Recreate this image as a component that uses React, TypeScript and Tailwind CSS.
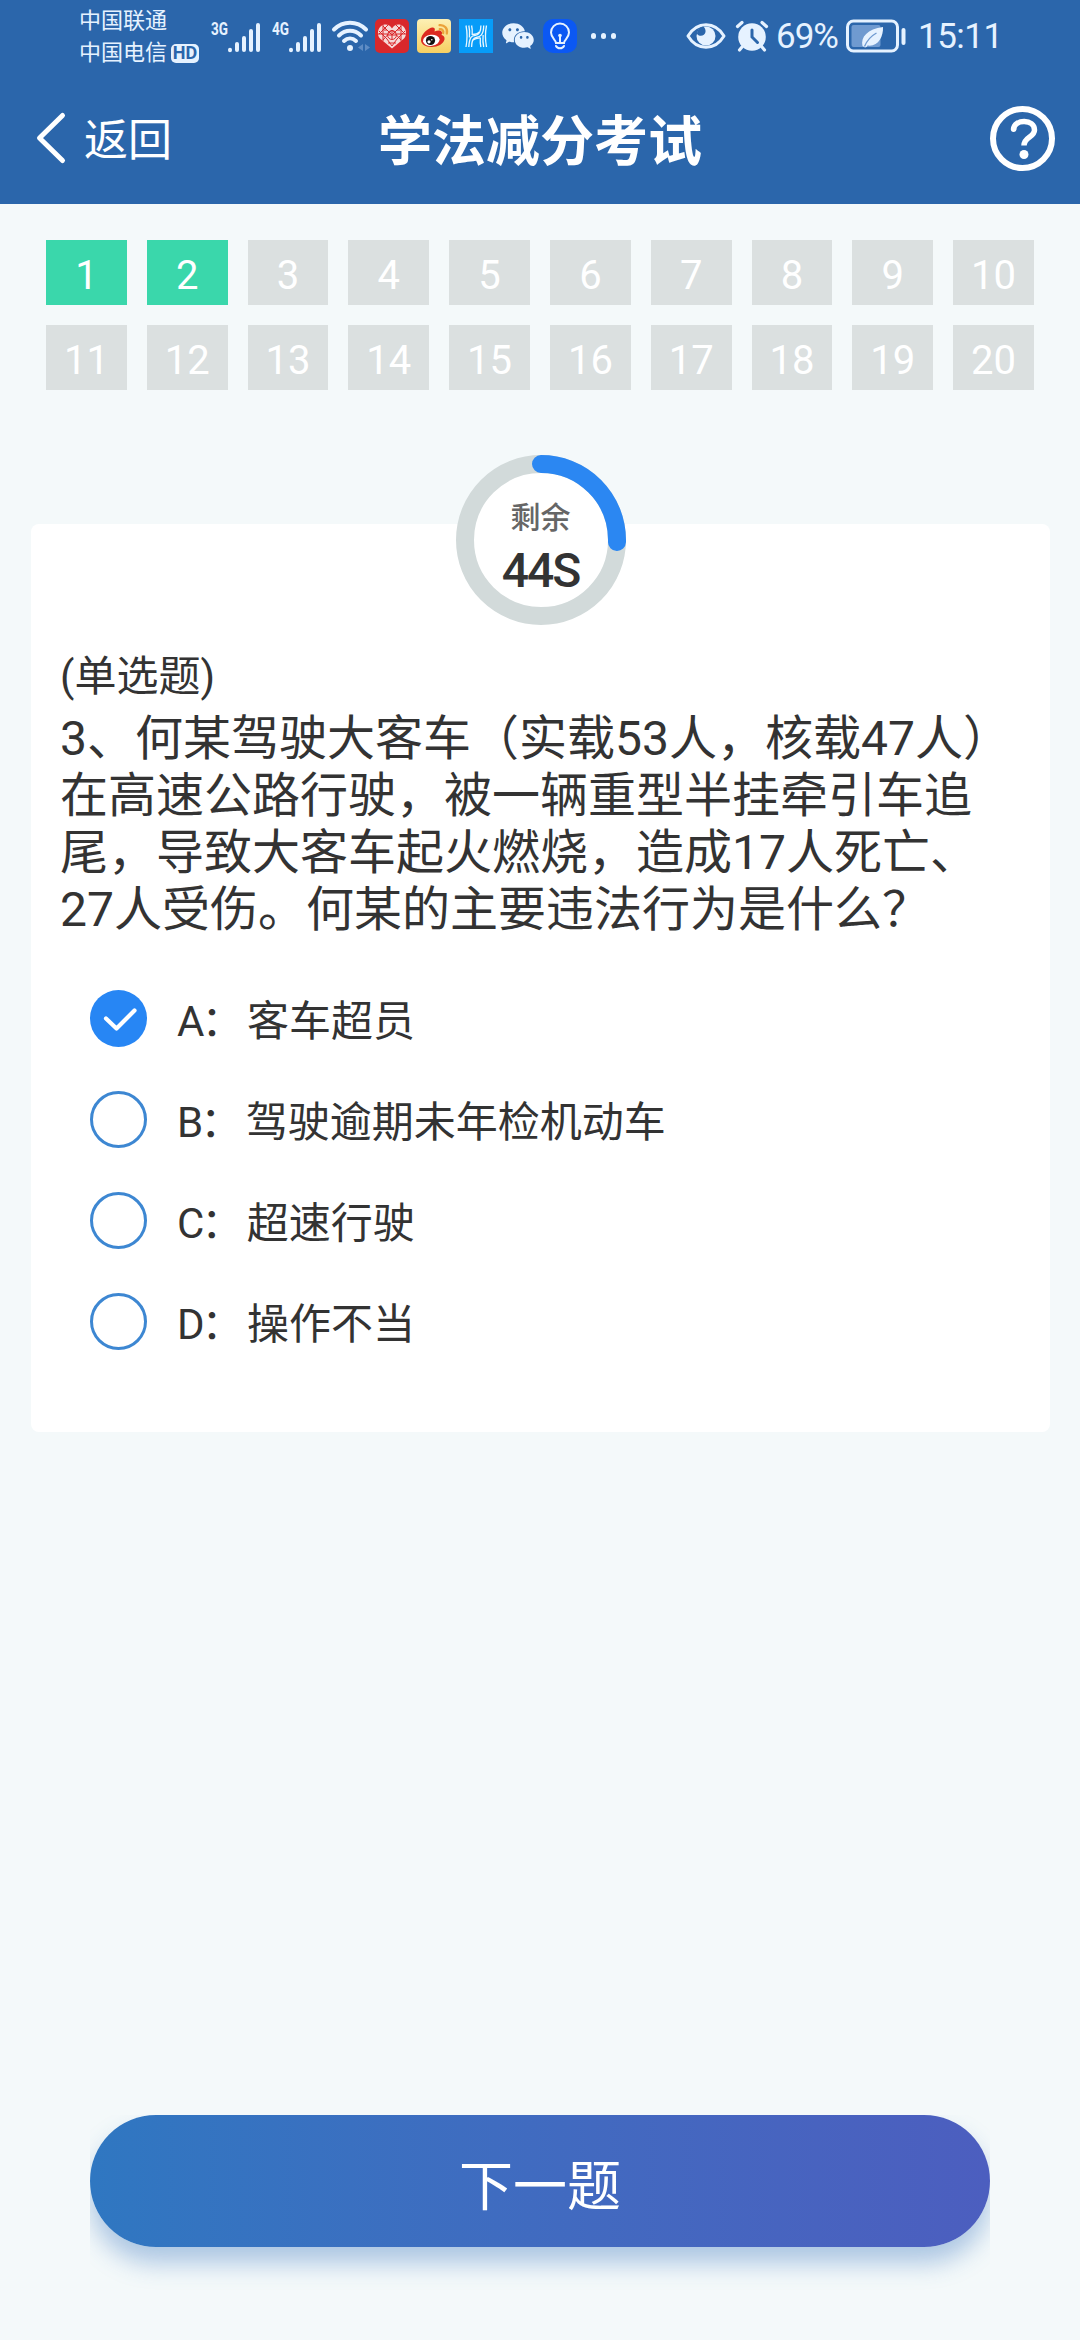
import React from "react";
import { AiFillWechat } from "react-icons/ai";

const FONT = "font-[Roboto,'Noto_Sans_CJK_SC',sans-serif]";

function Signal({ label }: { label: string }) {
  return (
    <svg width="50" height="34" viewBox="0 0 50 34" fill="none" stroke="#e6f2ff" strokeWidth="4" strokeLinecap="round">
      <text
        x="0"
        y="16"
        fontSize="18"
        fontWeight="700"
        fill="#e6f2ff"
        stroke="none"
        textLength="17"
        lengthAdjust="spacingAndGlyphs"
      >
        {label}
      </text>
      <path d="M19 30.800v.4M26 25v6M33 19v12M40 12v19M47 6v25" />
    </svg>
  );
}

function Wifi() {
  return (
    <svg width="40" height="34" viewBox="0 0 40 34" fill="none" stroke="#e6f2ff" strokeWidth="4" strokeLinecap="round">
      <path d="M3 10.500C12 1.500 26 1.500 35 10.500" />
      <path d="M8 16.500C14.500 10.300 23.500 10.300 30 16.500" />
      <path d="M13 22C16.500 18.800 21.500 18.800 25 22" />
      <circle cx="19" cy="29" r="3" fill="#e6f2ff" stroke="none" />
      <path d="M32 25l-5 3.500 5 3.500zM34 25l5 3.500-5 3.500z" fill="#5f8cc4" stroke="none" />
    </svg>
  );
}

function HuaweiHeart() {
  return (
    <svg width="34" height="34" viewBox="0 0 34 34">
      <rect width="34" height="34" rx="5" fill="#d9282b" />
      <path
        d="M17 29.500L5 19.500C1.500 16 2.500 8 8 6c4-1.300 7 .5 9 3.500C19 6.500 22 4.700 26 6c5.500 2 6.500 10 3 13.500z"
        fill="#f6d9d7"
      />
      <g stroke="#d9282b" strokeWidth="1" fill="none">
        <path d="M4 12l8 8M8 7l9 9M13 6l-9 9M17 11l-9 10M21 6l9 9M26 7l-9 9M30 12l-8 8M17 11l9 10M12 20l5 7 5-7M8 6v16M26 6v16M3 15h9M22 15h9" />
        <circle cx="17" cy="16" r="4.500" />
        <path d="M13 16h8M17 12v8M9 11h3M22 11h3M13 24h8" />
      </g>
    </svg>
  );
}

function Weibo() {
  return (
    <svg width="34" height="34" viewBox="0 0 34 34">
      <defs>
        <linearGradient id="weiboBg" x1="0" y1="0" x2="0" y2="1">
          <stop offset="0" stopColor="#fdf0b4" />
          <stop offset="1" stopColor="#f6cf62" />
        </linearGradient>
      </defs>
      <rect width="34" height="34" rx="4" fill="url(#weiboBg)" />
      <path
        d="M4 21c0-6 8-13 12-12.500 2 .3 2.200 2 1.500 4 3-1.500 7-1.800 7.500 1 .2 1-.3 1.800-.5 2.500 2 .6 3.500 2 3 4.500C26.500 25 21 28 14.500 28S4 25 4 21z"
        fill="#dc2a1f"
      />
      <ellipse cx="14.300" cy="21.300" rx="8.300" ry="5.600" fill="#fff" transform="rotate(-7 14.300 21.300)" />
      <circle cx="13.500" cy="21.500" r="4.600" fill="#111" />
      <circle cx="12" cy="22.800" r="1.600" fill="#fff" />
      <circle cx="14.800" cy="20.800" r=".8" fill="#fff" />
      <path
        d="M22.500 6.200c5-.6 8.500 3.500 7.300 8.300M22.800 10.200c2.500-.2 4 1.500 3.400 3.800"
        fill="none"
        stroke="#eba23a"
        strokeWidth="2.300"
        strokeLinecap="round"
      />
    </svg>
  );
}

function HApp() {
  return (
    <svg width="34" height="34" viewBox="0 0 34 34" fill="none" stroke="#eaf7ff" strokeWidth="1.300">
      <rect width="34" height="34" fill="#079cf8" stroke="none" />
      <path d="M7 6.500c1.200 6 1.200 15 0 21.500M9.800 6.500c1 4 1 7.500.6 12M12.600 6.500c.8 3 .8 6 .6 9.500" />
      <path d="M27.500 6.500c-1.200 6-1.200 15 0 21.500M24.700 28c-1-4-1-7.500-.6-12M21.900 28c-.8-3-.8-6-.6-9.500" />
      <path d="M21.900 6.500c0 8-2.500 9.500-5.500 9.800-3.500.4-6 1-6.600 11.700M24.700 6.500c0 9.500-3.500 11.300-7.500 12-3 .5-4.600 3-4.600 9.500" />
      <path d="M13.200 15.500c3 0 5.500-.5 7-2.500M14 21c1.500-1.200 4-2 7-2.200" />
    </svg>
  );
}

function Bulb() {
  return (
    <svg width="34" height="34" viewBox="0 0 34 34" fill="none" stroke="#e6f2ff" strokeWidth="2" strokeLinecap="round">
      <rect width="34" height="34" rx="10" fill="#0b58f3" stroke="none" />
      <path d="M13 24c0-3-5-5-5-10.500a9 9 0 0 1 18 0C26 19 21 21 21 24zM13 27c1.500 3 6.500 3 8 0M17 24v-7" />
      <circle cx="17" cy="16.500" r="1.800" fill="#e6f2ff" stroke="none" />
    </svg>
  );
}

function Eye() {
  return (
    <svg width="40" height="28" viewBox="0 0 40 28">
      <path d="M2 14C11-1 29-1 38 14 29 29 11 29 2 14z" fill="none" stroke="#e6f2ff" strokeWidth="3" strokeLinejoin="round" />
      <circle cx="20" cy="14" r="9.500" fill="#e6f2ff" />
      <path d="M11 12c3 3.500 8 1.500 8.500-2 .2-2-.5-4-2-5.500C14 5 11 8 11 12z" fill="#2b66ab" />
    </svg>
  );
}

function Alarm() {
  return (
    <svg width="34" height="32" viewBox="0 0 34 32" fill="none" strokeLinecap="round">
      <circle cx="17" cy="17" r="13.800" fill="#e6f2ff" />
      <path d="M2.500 6.500l4.500-4M31.500 6.500l-4.500-4M7 27l-2.500 3M27 27l2.500 3" stroke="#e6f2ff" strokeWidth="3.200" />
      <path d="M17 10v7l5.500 5.500" stroke="#2b66ab" strokeWidth="3" />
    </svg>
  );
}

function Battery() {
  return (
    <svg width="60" height="34" viewBox="0 0 60 34" fill="none">
      <rect x="1.500" y="2" width="50" height="30" rx="6" stroke="#e6f2ff" strokeWidth="3" />
      <rect x="5.500" y="6" width="29" height="22" rx="2" fill="#6f9ad0" />
      <path d="M16.500 27c-2-9 5-17 20.500-19 .5 10-5 20-15.500 18.500-.5 1-1.500 2-2.500 2z" fill="#e6f2ff" />
      <path d="M18.500 27.500C21 21.500 25 17 30.500 14" stroke="#6f9ad0" strokeWidth="1.400" />
      <path d="M57.500 11v13" stroke="#e6f2ff" strokeWidth="4" strokeLinecap="round" />
    </svg>
  );
}

function StatusBar() {
  return (
    <div className="flex h-[72px] items-center text-[#e6f2ff]">
      <div className="ml-[79px] flex w-[122px] flex-col pt-[2px] text-[22px] leading-[32px]">
        <span>中国联通</span>
        <div className="flex items-center">
          <span>中国电信</span>
          <span className="ml-[4px] flex h-[19px] w-[28px] items-center justify-center rounded-[5px] bg-[#e6f2ff] text-[18px] leading-none font-bold text-[#2b66ab]">
            HD
          </span>
        </div>
      </div>
      <div className="ml-[10px] flex items-center">
        <Signal label="3G" />
        <div className="ml-[10.500px]" />
        <Signal label="4G" />
        <div className="ml-[9px]" />
        <Wifi />
      </div>
      <div className="ml-[4px] flex items-center gap-[8px]">
        <HuaweiHeart />
        <Weibo />
        <HApp />
        <AiFillWechat className="-mx-px size-[36px]" />
        <Bulb />
      </div>
      <div className="ml-[14px] flex gap-[4.500px]">
        <i className="size-[5.500px] rounded-full bg-[#e6f2ff]" />
        <i className="size-[5.500px] rounded-full bg-[#e6f2ff]" />
        <i className="size-[5.500px] rounded-full bg-[#e6f2ff]" />
      </div>
      <div className="mr-[81px] ml-auto flex items-center">
        <Eye />
        <div className="ml-[9px]" />
        <Alarm />
        <span className="ml-[7px] w-[66px] pt-[3px] text-[35px] tracking-[-1px] whitespace-nowrap">69%</span>
        <div className="ml-[4px]" />
        <Battery />
        <span className="ml-[12px] w-[81px] pt-[3px] text-[35px] tracking-[-0.500px] whitespace-nowrap">15:11</span>
      </div>
    </div>
  );
}

function NavBar() {
  return (
    <div className="grid h-[132px] grid-cols-3 items-center text-white">
      <div className="flex items-center">
        <svg
          className="ml-[34px]"
          width="34"
          height="54"
          viewBox="0 0 34 54"
          fill="none"
          stroke="#fff"
          strokeWidth="5"
          strokeLinecap="round"
          strokeLinejoin="round"
        >
          <path d="M28.500 4.500L5.500 27 28.500 49.500" />
        </svg>
        <span className="ml-[16px] pt-[6px] text-[44px] leading-none">返回</span>
      </div>
      <h1 className="pt-[10px] text-center text-[54px] leading-none font-bold whitespace-nowrap">学法减分考试</h1>
      <svg className="mr-[24px] justify-self-end" width="67" height="67" viewBox="0 0 67 67" fill="none" stroke="#fff">
        <circle cx="33.500" cy="33.500" r="29.500" strokeWidth="6" />
        <path d="M24.500 24.500c1-11 21-10.500 21 .5 0 7.500-10.500 6.500-10.500 15.500" strokeWidth="5.500" />
        <circle cx="24.600" cy="24.200" r="2.700" fill="#fff" stroke="none" />
        <circle cx="35" cy="49.500" r="4.500" fill="#fff" stroke="none" />
      </svg>
    </div>
  );
}

function Timer() {
  const length = 2 * Math.PI * 76;
  return (
    <div className="absolute top-[-69px] left-1/2 size-[170px] -translate-x-1/2">
      <svg className="absolute inset-0" width="170" height="170" viewBox="0 0 170 170" fill="none" strokeWidth="18">
        <circle cx="85" cy="85" r="76" fill="#fff" stroke="#d2dada" />
        <circle
          cx="85"
          cy="85"
          r="76"
          stroke="#2b87f2"
          strokeLinecap="round"
          strokeDasharray={`${length * 0.254} ${length}`}
          transform="rotate(-90 85 85)"
        />
      </svg>
      <div className="relative flex flex-col items-center pt-[48px]">
        <span className="text-[30px] leading-[30px] font-medium text-[#666]">剩余</span>
        <span className="mt-[14px] text-[48px] leading-[48px] font-medium tracking-[-2px] text-[#333]">44S</span>
      </div>
    </div>
  );
}

const options = [
  { key: "A", text: "客车超员" },
  { key: "B", text: "驾驶逾期未年检机动车" },
  { key: "C", text: "超速行驶" },
  { key: "D", text: "操作不当" },
];

function Radio({ checked }: { checked: boolean }) {
  if (!checked) return <span className="size-[57px] rounded-full border-[3px] border-[#3d87d2]" />;
  return (
    <span className="flex size-[57px] items-center justify-center rounded-full bg-[#2786f4]">
      <svg
        width="57"
        height="57"
        viewBox="0 0 57 57"
        fill="none"
        stroke="#fff"
        strokeWidth="4.200"
        strokeLinecap="round"
        strokeLinejoin="round"
      >
        <path d="M16 28.500L26.500 38.500 44.500 20.500" />
      </svg>
    </span>
  );
}

export default function App() {
  const [selected, setSelected] = React.useState("A");
  return (
    <div className={`flex h-[2340px] w-[1080px] flex-col overflow-hidden bg-[#f4f9fa] ${FONT}`}>
      <header className="h-[204px] bg-[#2b66ab]">
        <StatusBar />
        <NavBar />
      </header>

      <div className="mx-[46px] mt-9 grid grid-cols-10 gap-5">
        {Array.from({ length: 20 }, (_, i) => (
          <div
            key={i}
            className={`flex h-[65px] items-center justify-center pt-[7px] text-[40px] leading-none text-white ${
              i < 2 ? "bg-[#3ad7ab]" : "bg-[#dbe0e0]"
            }`}
          >
            {i + 1}
          </div>
        ))}
      </div>

      <main className="relative mr-[30px] ml-[31px] mt-[134px] h-[908px] rounded-[8px] bg-white pl-[29px] text-[#333]">
        <Timer />
        <p className="pt-[128px] text-[42px] leading-[50px]">(单选题)</p>
        <p className="mt-[8px] text-[48px] leading-[57px] whitespace-nowrap">
          3、何某驾驶大客车（实载53人，核载47人）
          <br />
          在高速公路行驶，被一辆重型半挂牵引车追
          <br />
          尾，导致大客车起火燃烧，造成17人死亡、
          <br />
          27人受伤。何某的主要违法行为是什么？
        </p>
        <div className="mt-[52px] ml-[30px] flex flex-col gap-11">
          {options.map((o) => (
            <div key={o.key} className="flex h-[57px] cursor-pointer items-center" onClick={() => setSelected(o.key)}>
              <Radio checked={selected === o.key} />
              <span className="ml-[30px] pt-[6px] text-[42px] leading-none">
                {o.key}
                <span className="-ml-[3px] mr-[3.500px]">：</span>
                {o.text}
              </span>
            </div>
          ))}
        </div>
      </main>

      <footer className="mx-[90px] mt-auto h-[225px] overflow-hidden">
        <button className="flex h-[132px] w-full items-center justify-center rounded-full bg-linear-to-r from-[#2f77c1] to-[#4c5ebf] pt-[14px] text-[54px] leading-none text-white shadow-[0_16px_24px_rgba(55,115,190,0.38)]">
          下一题
        </button>
      </footer>
    </div>
  );
}
